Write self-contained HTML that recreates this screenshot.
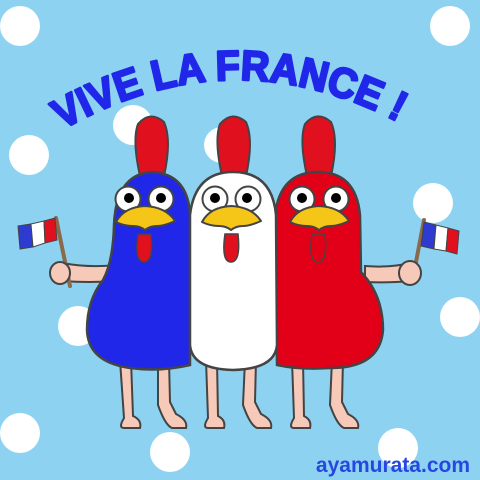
<!DOCTYPE html>
<html><head><meta charset="utf-8"><style>
html,body{margin:0;padding:0;background:#8dd3f1;}
svg{display:block}
</style></head><body>
<svg width="480" height="480" viewBox="0 0 480 480" xmlns="http://www.w3.org/2000/svg">
<rect width="480" height="480" fill="#8dd3f1"/>
<g fill="#fff">
<circle cx="20" cy="26" r="20"/><circle cx="450" cy="26" r="20"/>
<circle cx="133" cy="125" r="20"/><circle cx="222" cy="145" r="18"/>
<circle cx="29" cy="155" r="20"/><circle cx="433" cy="203" r="20"/>
<circle cx="78" cy="326" r="20"/><circle cx="460" cy="317" r="20"/>
<circle cx="20" cy="433" r="20"/><circle cx="170" cy="452" r="20"/>
<circle cx="398" cy="448" r="20"/>
</g>
<defs><path id="arc" d="M 62 130 Q 240 28 420 134"/></defs>
<text font-family="Liberation Sans, sans-serif" font-weight="bold" font-size="42" fill="#2027e8" stroke="#2027e8" stroke-width="2.5" stroke-linejoin="round"><textPath href="#arc" textLength="352" lengthAdjust="spacingAndGlyphs">VIVE LA FRANCE !</textPath></text>

<!-- legs -->
<g fill="#f7c9b8" stroke="#444" stroke-width="2">
<path d="M120 360 L124 418 Q118 428 124 428 L140 428 Q142 420 133 416 L131 360Z"/>
<path d="M158 360 L158 405 Q165 425 172 428 L186 428 Q188 420 176 414 L170 402 L169 360Z"/>
<path d="M206 360 L208 418 Q202 428 208 428 L224 428 Q226 420 218 416 L217 360Z"/>
<path d="M245 360 L243 405 Q250 425 257 428 L271 428 Q273 420 261 414 L255 402 L256 360Z"/>
<path d="M292 360 L294 418 Q288 428 294 428 L310 428 Q312 420 304 416 L303 360Z"/>
<path d="M332 360 L330 405 Q337 425 344 428 L358 428 Q360 420 348 414 L342 402 L343 360Z"/>
</g>

<!-- arms -->
<g fill="#f7c9b8" stroke="#444" stroke-width="2">
<path d="M62 263 Q90 268 115 265 L113 281 Q90 283 62 281Z"/>
<path d="M365 266 Q390 268 410 263 L410 281 Q390 283 365 282Z"/>
</g>
<!-- poles -->
<g stroke="#8a6a4a" stroke-width="4" stroke-linecap="round">
<line x1="56" y1="218" x2="70" y2="286"/>
<line x1="424" y1="220" x2="412" y2="283"/>
</g>
<!-- hands -->
<ellipse cx="60" cy="273" rx="10" ry="11" fill="#f7c9b8" stroke="#444" stroke-width="2"/>
<ellipse cx="410" cy="273" rx="11" ry="12" fill="#f7c9b8" stroke="#444" stroke-width="2"/>
<!-- flags -->
<g stroke="#444" stroke-width="1">
<path d="M18 226 L31 224 L33 247 L20 249Z" fill="#2d3bd0"/>
<path d="M31 224 L44 221 L45 243 L33 247Z" fill="#fff"/>
<path d="M44 221 L55 218 L57 240 L45 243Z" fill="#e0101f"/>
<path d="M424 222 L436 225 L434 249 L421 246Z" fill="#2d3bd0"/>
<path d="M436 225 L448 228 L446 251 L434 249Z" fill="#fff"/>
<path d="M448 228 L459 231 L457 254 L446 251Z" fill="#e0101f"/>
</g>

<!-- combs -->
<g stroke="#444" stroke-width="2" fill="#e0101f">
<path d="M140 176 Q132 140 138 124 Q150 110 164 122 Q172 140 164 176Z"/>
<path d="M222 176 Q214 140 220 124 Q232 110 246 122 Q254 140 246 176Z"/>
<path d="M307 176 Q299 140 305 124 Q317 110 331 122 Q339 140 331 176Z"/>
</g>

<!-- bodies -->
<g stroke="#444" stroke-width="2.5">
<path d="M152 172 Q188 174 190 215 L190 365 Q160 372 130 368 Q88 362 87 330 Q87 300 103 280 Q113 262 114 225 Q116 174 152 172Z" fill="#2027e8"/>
<path d="M318 172 Q356 172 360 215 L361 272 Q383 295 383 330 Q380 368 330 368 Q300 370 277 365 L275 215 Q280 172 318 172Z" fill="#e20018"/>
<path d="M233 172 Q272 172 276 215 L277 345 Q275 369 233 370 Q192 369 190 345 L190 215 Q195 172 233 172Z" fill="#fff"/>
</g>

<!-- eyes -->
<g fill="#fff" stroke="#444" stroke-width="2">
<circle cx="128" cy="199" r="12.5"/><circle cx="161" cy="199" r="12.5"/>
<circle cx="215" cy="199" r="12.5"/><circle cx="248" cy="199" r="12.5"/>
<circle cx="302" cy="199" r="12.5"/><circle cx="336" cy="199" r="12.5"/>
</g>
<g fill="#000">
<circle cx="129" cy="198" r="5"/><circle cx="161" cy="198" r="5"/>
<circle cx="215" cy="198" r="5"/><circle cx="247" cy="198" r="5"/>
<circle cx="302" cy="198" r="5"/><circle cx="336" cy="198" r="5"/>
</g>
<!-- wattles -->
<g fill="#e0101f" stroke="#444" stroke-width="1.5">
<path d="M138 234 Q134 262 144 262 Q154 262 151 234Z"/>
<path d="M225 234 Q221 262 231 262 Q241 262 238 234Z"/>
<path d="M312 234 Q308 262 318 262 Q328 262 325 234Z" fill="#e20018"/>
</g>
<!-- beaks -->
<g fill="#f5c518" stroke="#444" stroke-width="2" stroke-linejoin="round">
<path d="M116 222 Q124 207 145 206 Q166 207 175 221 Q164 226 157 226 Q150 226 145 230 Q140 226 133 226 Q124 226 116 222Z"/>
<path d="M202 222 Q210 207 231 206 Q252 207 261 221 Q250 226 243 226 Q236 226 231 230 Q226 226 219 226 Q210 226 202 222Z"/>
<path d="M290 222 Q298 207 319 206 Q340 207 349 221 Q338 226 331 226 Q324 226 319 230 Q314 226 307 226 Q298 226 290 222Z"/>
</g>

<text x="470" y="472" text-anchor="end" font-family="Liberation Sans, sans-serif" font-weight="bold" font-size="21" fill="#2747e0">ayamurata.com</text>
</svg>
</body></html>
